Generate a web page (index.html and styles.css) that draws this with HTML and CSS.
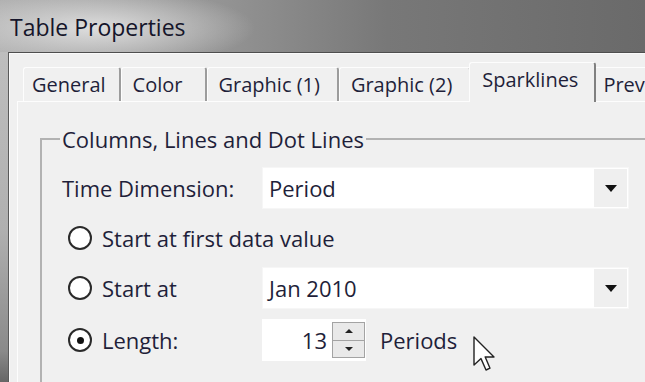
FILE: index.html
```html
<!DOCTYPE html>
<html lang="en">
<head>
    <meta charset="UTF-8">
    <title>Table Properties</title>
    <link rel="stylesheet" href="styles.css">
</head>
<body>
    <div class="window">
        <div class="titlebar">Table Properties</div>

        <div class="client">
            <div class="tabs">
                <div class="tab tab-general">General</div>
                <div class="tab tab-color">Color</div>
                <div class="tab">Graphic (1)</div>
                <div class="tab">Graphic (2)</div>
                <div class="tab active">Sparklines</div>
                <div class="tab tab-last">Prev</div>
            </div>

            <div class="panel">
                <fieldset class="group">
                    <legend>Columns, Lines and Dot Lines</legend>

                    <div class="field-row">
                        <span class="field-label">Time Dimension:</span>
                        <div class="combo">
                            <span class="combo-value">Period</span>
                            <span class="combo-btn"><i class="arrow-down"></i></span>
                        </div>
                    </div>

                    <div class="field-row radio-row">
                        <label class="radio-label"><span class="radio"></span>Start at first data value</label>
                    </div>

                    <div class="field-row radio-row">
                        <label class="radio-label short"><span class="radio"></span>Start at</label>
                        <div class="combo">
                            <span class="combo-value">Jan 2010</span>
                            <span class="combo-btn"><i class="arrow-down"></i></span>
                        </div>
                    </div>

                    <div class="field-row radio-row spin-row">
                        <label class="radio-label short"><span class="radio checked"></span>Length:</label>
                        <div class="spin">
                            <span class="spin-value">13</span>
                            <span class="spin-btns">
                                <span class="spin-btn"><i class="tri-up"></i></span>
                                <span class="spin-btn"><i class="tri-down"></i></span>
                            </span>
                        </div>
                        <span class="unit">Periods</span>
                    </div>
                </fieldset>
            </div>
        </div>

        <svg class="cursor" viewBox="0 0 13 19" width="26" height="38">
            <path d="M1 1 L1 15 L4.5 11.8 L7 17.5 L9 16.6 L6.6 11 L11 11 Z" fill="#fff" stroke="#222" stroke-width="0.7" stroke-linejoin="round"></path>
        </svg>
    </div>
</body>
</html>
```

FILE: styles.css
```css
:root {
    --cor-fundo: #f0f0f0;
    --cor-texto: #1f1f3a;
    --cor-borda: #a3a3a3;
}

html, body {
    margin: 0;
    padding: 0;
}

body {
    width: 645px;
    height: 382px;
    overflow: hidden;
    font-family: 'Open Sans', 'Noto Sans', sans-serif;
    font-size: 22px;
    color: var(--cor-texto);
}

.window {
    position: relative;
    height: 382px;
    overflow: hidden;
    display: flex;
    flex-direction: column;
    background: linear-gradient(to bottom, #c2c2c2 0%, #b0b0b0 60%, #8a8a8a 92%, #666 100%);
}

.titlebar {
    height: 52px;
    flex: none;
    display: flex;
    align-items: center;
    padding: 2px 0 0 10px;
    box-sizing: border-box;
    font-size: 23px;
    color: #15152a;
    background:
        radial-gradient(ellipse 160px 40px at 95px 28px, rgba(225, 225, 225, 0.95), rgba(225, 225, 225, 0) 100%),
        linear-gradient(to right, #adadad 0%, #939393 35%, #787878 60%, #6a6a6a 100%);
}

.client {
    flex: 1;
    min-height: 0;
    overflow: hidden;
    margin-left: 8px;
    padding-left: 8px;
    border-top: 1px solid #4e4e4e;
    border-left: 1px solid #5a5a5a;
    box-shadow: inset 1px 1px 0 #fafafa;
    background-color: var(--cor-fundo);
}

/* tabs */
.tabs {
    height: 48px;
    display: flex;
    align-items: flex-end;
    padding-left: 6px;
    white-space: nowrap;
    font-size: 20px;
}

.tab {
    height: 34px;
    box-sizing: border-box;
    padding: 2px 17px 0 11px;
    line-height: 30px;
    border-top: 1px solid #fdfdfd;
    border-left: 1px solid #fdfdfd;
    border-right: 2px solid #9c9c9c;
    border-radius: 3px 3px 0 0;
    background-color: var(--cor-fundo);
    flex: none;
}

.tab-general { padding-left: 8px; padding-right: 13px; }
.tab-color { padding-right: 22px; }
.tab-last { padding-left: 8px; }

.tab.active {
    height: 40px;
    margin: 0 -2px -1px -2px;
    padding: 0 16px 0 12px;
    line-height: 34px;
    position: relative;
    z-index: 2;
    border-right-color: #808080;
}

.panel {
    height: 100%;
    border-top: 1px solid #fdfdfd;
    border-left: 1px solid #fdfdfd;
    padding-left: 22px;
}

/* group box */
.group {
    margin: 25px 0 0 0;
    padding: 16px 0 0 0;
    min-height: 300px;
    border: none;
    border-top: 2px solid #b2b2b2;
    border-left: 2px solid #b2b2b2;
    display: flex;
    flex-direction: column;
    gap: 8px;
}

.group legend {
    margin-left: 18px;
    padding: 0 2px;
    line-height: 24px;
}

.field-row {
    height: 42px;
    display: flex;
    align-items: center;
    padding-left: 20px;
}

.field-label { width: 200px; flex: none; }

.radio-row { padding-left: 26px; }
.spin-row { margin-top: 2px; }

.radio-label {
    display: flex;
    align-items: center;
}

.radio-label.short { width: 194px; flex: none; }

.radio {
    width: 24px;
    height: 24px;
    box-sizing: border-box;
    border: 2px solid #2a2a2a;
    border-radius: 50%;
    background-color: #fff;
    margin-right: 10px;
    display: flex;
    align-items: center;
    justify-content: center;
}

.radio.checked::after {
    content: '';
    width: 7px;
    height: 7px;
    border-radius: 50%;
    background-color: #111;
}

/* combo box */
.combo {
    width: 367px;
    height: 42px;
    box-sizing: border-box;
    display: flex;
    align-items: stretch;
    background-color: #fff;
    border: 1px solid #f6f6f6;
}

.combo-value {
    flex: 1;
    padding-left: 6px;
    display: flex;
    align-items: center;
}

.combo-btn {
    width: 33px;
    margin: 1px 1px 1px 0;
    background-color: #efefef;
    display: flex;
    align-items: center;
    justify-content: center;
}

.arrow-down {
    width: 0;
    height: 0;
    border-left: 6px solid transparent;
    border-right: 6px solid transparent;
    border-top: 7px solid #111;
}

/* spin box */
.spin {
    width: 104px;
    height: 42px;
    box-sizing: border-box;
    display: flex;
    align-items: center;
    background-color: #fff;
    padding: 3px 1px 3px 0;
}

.spin-value {
    flex: 1;
    text-align: right;
    padding-right: 5px;
}

.spin-btns {
    width: 33px;
    height: 100%;
    display: flex;
    flex-direction: column;
}

.spin-btn {
    flex: 1;
    border: 1px solid var(--cor-borda);
    background-color: #e9e9e9;
    display: flex;
    align-items: center;
    justify-content: center;
}

.spin-btn + .spin-btn { border-top: none; }

.tri-up, .tri-down {
    width: 0;
    height: 0;
    border-left: 4px solid transparent;
    border-right: 4px solid transparent;
}
.tri-up { border-bottom: 4px solid #222; }
.tri-down { border-top: 4px solid #222; }

.unit { margin-left: 14px; }

.cursor {
    position: absolute;
    left: 472px;
    top: 335px;
}
```
